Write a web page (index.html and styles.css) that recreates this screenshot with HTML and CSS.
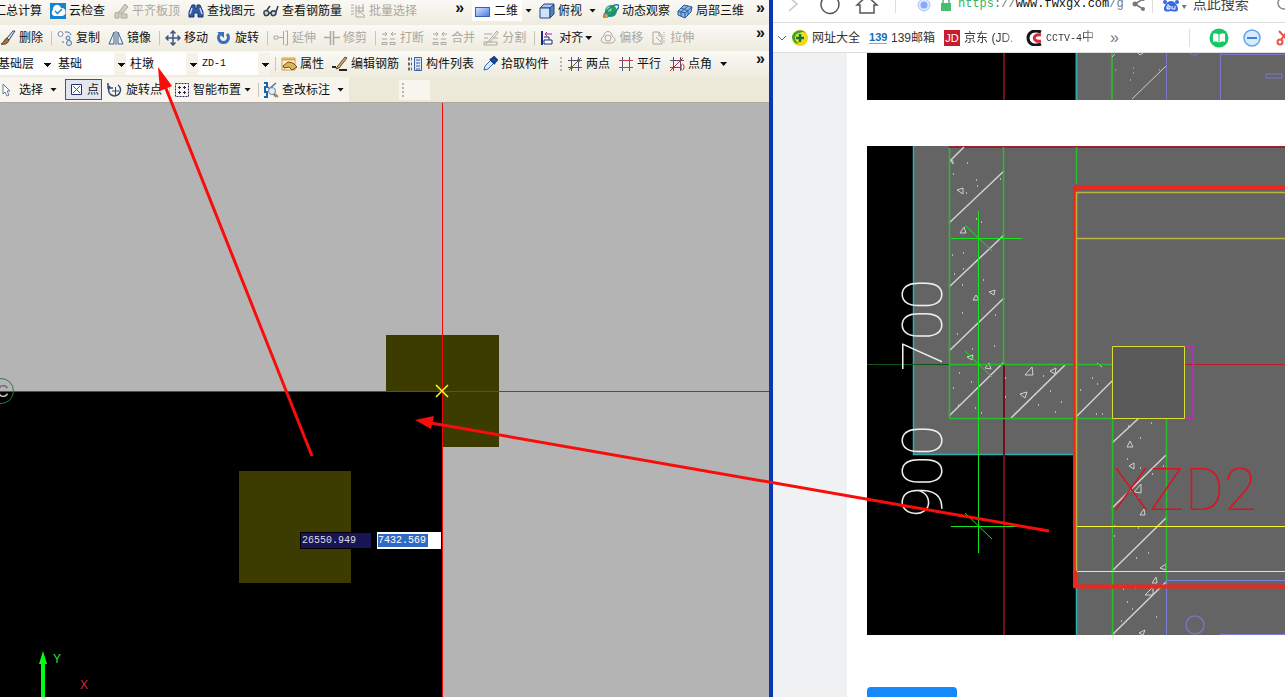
FILE: index.html
```html
<!DOCTYPE html>
<html lang="zh-CN">
<head>
<meta charset="utf-8">
<title>柱墩 ZD-1</title>
<link rel="stylesheet" href="styles.css">
</head>
<body>
<svg class="defs" aria-hidden="true">
  <defs>
    <linearGradient id="blue" x1="0" y1="0" x2="1" y2="1"><stop offset="0" stop-color="#dbe8ff"/><stop offset="1" stop-color="#4478e4"/></linearGradient>
    <linearGradient id="split" gradientUnits="userSpaceOnUse" x1="0" y1="390" x2="0" y2="392"><stop offset="0" stop-color="#6a6a6a"/><stop offset="1" stop-color="#cfcfcf"/></linearGradient>
    <symbol id="grid" viewBox="0 0 16 16"><path d="M1 4.500h14M1 11.500h14M4.500 1v14M11.500 1v14" stroke="#555477" fill="none"/></symbol>
    <symbol id="pair" viewBox="0 0 16 16"><path d="M1 12.500h5v2H1zM9 12.500h5v2H9zM1 9h5M9 9h5M1 4h5M4 2l2 2-2 2M15 4h-5M12 2l-2 2 2 2" stroke="#aaa89f" fill="none"/></symbol>
  </defs>
</svg>
<div class="desktop">
  <main class="cad">
    <div class="toolbars">
      <div class="bar bar-first">
        <button class="tool cut">汇总计算</button>
        <button class="tool"><svg viewBox="0 0 16 16"><rect width="16" height="16" fill="#1684d5"/><path d="M4 13a3.500 3.500 0 0 1-1-6 4 4 0 0 1 8-2 4 4 0 0 1 1 8z" fill="#fff"/><path d="M5 8l2.500 2.500L12 6" stroke="#1684d5" stroke-width="1.500" fill="none"/></svg>云检查</button>
        <button class="tool" disabled><svg viewBox="0 0 16 16"><path d="M2 15v-5l4-1 6-8 3 3-5 6H6v5zM8 11h6v4H8z" fill="#d0cec4" stroke="#aaa89f"/></svg>平齐板顶</button>
        <button class="tool"><svg viewBox="0 0 16 16"><path d="M1 14V9l3-7h3v3h2V2h3l3 7v5h-5v-4H6v4z" fill="#315ba5" stroke="#173469"/><path d="M4 5l-2 6M12 5l2 6" stroke="#bfd7ff" stroke-width="1.500"/></svg>查找图元</button>
        <button class="tool"><svg viewBox="0 0 16 16"><path d="M1 9c0-2 5-2 5 1s-5 4-5 0zM8 10c0-3 5-3 5 0s-5 4-5 0zM6 10h2M4 7l3-4M13 9l2-6" fill="#c3d0e0" stroke="#343b4c" stroke-width="1.500"/></svg>查看钢筋量</button>
        <button class="tool" disabled><svg viewBox="0 0 16 16"><path d="M1 2h3M1 5h3M1 8h3M1 11h3M6 2v12h9M6 5h8M6 8h8M9 2v9M13 1v8M10 9l5 4" stroke="#aaa89f" fill="none"/></svg>批量选择</button>
        <span class="more">»</span>
        <div class="view">
          <button class="tool"><svg viewBox="0 0 16 16"><rect x=".5" y="4.500" width="14" height="9" fill="url(#blue)" stroke="#3560bd"/></svg>二维</button><i class="caret"></i>
          <button class="tool"><svg viewBox="0 0 16 16"><path d="M1 5l4-4h10l-4 4z" fill="#a6c8f2" stroke="#24477c"/><path d="M1 5h10v10H1z" fill="#cfe3fa" stroke="#24477c"/><path d="M11 5l4-4v10l-4 4z" fill="#4f84c7" stroke="#24477c"/></svg>俯视</button><i class="caret"></i>
          <button class="tool"><svg viewBox="0 0 16 16"><circle cx="8" cy="8" r="6" fill="#1fa351"/><circle cx="6" cy="6" r="2.500" fill="#8be0a0"/><path d="M1 14C0 10 11 0 15 2s-8 13-14 12z" fill="none" stroke="#217aaf" stroke-width="1.500"/><circle cx="3" cy="13" r="2" fill="#e39a27"/></svg>动态观察</button>
          <button class="tool"><svg viewBox="0 0 16 16"><path d="M1 8l6-6 8 2-1 5-6 6-7-3z" fill="#8cb8e9" stroke="#2a5b96"/><path d="M1 8l7 2 7-6M8 10v5M4 5l7 3v4M4 13V9l7-6" fill="none" stroke="#2a5b96"/></svg>局部三维</button>
        </div>
        <span class="more last">»</span>
      </div>
      <div class="bar">
        <button class="tool"><svg viewBox="0 0 16 16"><path d="M15 1l-6 9-2-2 6-7z" fill="#d7e1f4" stroke="#304675"/><path d="M7 8l2 2c-1 4-5 5-8 4 3-1 3-5 6-6z" fill="#9a783b" stroke="#594319"/></svg>删除</button>
        <i class="sep"></i>
        <button class="tool"><svg viewBox="0 0 16 16"><circle cx="3.500" cy="4" r="2.500" fill="#fff" stroke="#7887a1"/><circle cx="11" cy="8" r="2" fill="#d8e9ff" stroke="#5372aa"/><circle cx="12" cy="13" r="2.500" fill="#d8e9ff" stroke="#5372aa"/><path d="M8 2c3 0 5 0 6 3M7 12H5" fill="none" stroke="#53678b"/></svg>复制</button>
        <button class="tool"><svg viewBox="0 0 16 16"><path d="M6 2v12H1zM10 2v12h5z" fill="#e7f0fb" stroke="#3d608d"/><path d="M8 1v14" stroke="#3d608d"/></svg>镜像</button>
        <i class="sep"></i>
        <button class="tool"><svg viewBox="0 0 16 16"><path d="M8 1v14M1 8h14M5.500 3.500L8 1l2.500 2.500M5.500 12.500L8 15l2.500-2.500M3.500 5.500L1 8l2.500 2.500M12.500 5.500L15 8l-2.500 2.500" fill="none" stroke="#3f587f" stroke-width="1.500"/></svg>移动</button>
        <button class="tool"><svg viewBox="0 0 16 16"><path d="M4 4a5 5 0 1 0 7 0" fill="none" stroke="#3970bb" stroke-width="3"/><path d="M1 2h7v6z" fill="#3970bb"/></svg>旋转</button>
        <i class="sep"></i>
        <button class="tool" disabled><svg viewBox="0 0 16 16"><path d="M1 6h4v3H1zM6 7.500h4M10.500 1v14M12.500 1h2v14h-2" stroke="#aaa89f" fill="none"/></svg>延伸</button>
        <button class="tool" disabled><svg viewBox="0 0 16 16"><path d="M0 7.500h6M10 7.500h6M6.500 1v14M9.500 1v14" stroke="#aaa89f" fill="none" stroke-width="1.500"/></svg>修剪</button>
        <i class="sep"></i>
        <button class="tool" disabled><svg><use href="#pair"/></svg>打断</button>
        <button class="tool" disabled><svg><use href="#pair"/></svg>合并</button>
        <button class="tool" disabled><svg viewBox="0 0 16 16"><path d="M1 4h8M1 8h4M10 8h5M1 12h13v3H1zM3 14L14 1l1 2-9 10" stroke="#aaa89f" fill="none"/></svg>分割</button>
        <i class="sep"></i>
        <button class="tool"><svg viewBox="0 0 16 16"><path d="M2 1v14" stroke="#162980" stroke-width="2"/><path d="M4 10h8v4H4zM4 7h5v3" fill="#fff" stroke="#162980"/><path d="M12 4H5M7 2L5 4l2 2" stroke="#b11ba5" fill="none"/></svg>对齐</button><i class="caret near"></i>
        <button class="tool" disabled><svg viewBox="0 0 16 16"><path d="M4 6c0-6 8-6 8 0 5 3 3 7-1 7H5c-5 0-5-5-1-7z" stroke="#aaa89f" fill="none"/><circle cx="8" cy="8" r="3" fill="none" stroke="#aaa89f"/></svg>偏移</button>
        <button class="tool" disabled><svg viewBox="0 0 16 16"><path d="M2 2h6l3 4v8H2zM8 2v4h3M5 7l5 5" stroke="#aaa89f" fill="none"/><path d="M13 2v12" stroke="#aaa89f" stroke-dasharray="1 1"/></svg>拉伸</button>
        <span class="more end">»</span>
      </div>
      <div class="bar">
        <select class="combo first" aria-label="楼层"><option>基础层</option></select>
        <select class="combo" aria-label="构件类别"><option>基础</option></select>
        <select class="combo" aria-label="构件类型"><option>柱墩</option></select>
        <select class="combo latin" aria-label="构件"><option>ZD-1</option></select>
        <i class="sep gapless"></i>
        <button class="tool"><svg viewBox="0 0 16 16"><path d="M1 2h13v12H1z" fill="#fff1d4" stroke="#d39b46"/><path d="M1 3.500h13" stroke="#e5a34d" stroke-width="2"/><path d="M2 10l5-4 5 1 4 4-5 3-3-3-5 1z" fill="#d9b657" stroke="#674d1c"/></svg>属性</button>
        <button class="tool"><svg viewBox="0 0 16 16"><path d="M5 11l8-10 2 1-8 10-3 1z" fill="#d2ac67" stroke="#644c25"/><path d="M0 11h4M7 14h8" stroke="#252525" stroke-width="2"/></svg>编辑钢筋</button>
        <button class="tool"><svg viewBox="0 0 16 16"><path d="M1 3h4M1 8h4M1 13h4" stroke="#666" stroke-width="3" stroke-dasharray="2 1"/><path d="M7.500 1.500h7v13h-7z" fill="#dce9ff" stroke="#3c5c9d"/><path d="M9 4h4M9 7h4M9 10h4M9 13h4" stroke="#3c5c9d"/></svg>构件列表</button>
        <button class="tool"><svg viewBox="0 0 16 16"><path d="M2 14l1-4 6-6 3 3-6 6z" fill="#d6e9ff" stroke="#3268a4"/><path d="M8 3l5 5M9 4l3-3 3 3-3 3z" fill="#195cac" stroke="#163c83" stroke-width="2"/></svg>拾取构件</button>
        <i class="grip"></i>
        <button class="tool"><svg viewBox="0 0 16 16"><use href="#grid"/><path d="M2 14L14 2" stroke="#555d37"/><circle cx="4.500" cy="11.500" r="1.500" fill="#5a643b"/><circle cx="11.500" cy="4.500" r="1.500" fill="#5a643b"/></svg>两点</button>
        <button class="tool"><svg viewBox="0 0 16 16"><use href="#grid"/><path d="M1 4.500h14M1 11.500h14" stroke="#b64058"/></svg>平行</button>
        <button class="tool"><svg viewBox="0 0 16 16"><use href="#grid"/><path d="M1 15L14 2" stroke="#b43345"/><ellipse cx="13.500" cy="11" rx="1.500" ry="3" fill="#fff" stroke="#e12727"/></svg>点角</button><i class="caret"></i>
        <span class="more end">»</span>
      </div>
      <div class="bar bar-last">
        <div class="modes">
          <button class="tool"><svg viewBox="0 0 16 16"><path d="M3 2v10l2-2 2 4 2-1-2-4h3z" fill="#fff" stroke="#6d7a95"/></svg>选择</button><i class="caret"></i>
          <button class="tool active" aria-pressed="true"><svg viewBox="0 0 16 16"><path d="M2.500 2.500h10v10h-10z" fill="#fff" stroke="#26306d"/><path d="M4 4l7 7M11 4l-7 7" stroke="#b72d4d"/></svg>点</button>
          <button class="tool"><svg viewBox="0 0 16 16"><path d="M3 4a6 6 0 1 0 8-1M1 1v5h5" stroke="#304979" stroke-width="1.500" fill="none"/><path d="M5 9h7M8.500 5v8" stroke="#34496c"/></svg>旋转点</button>
          <i class="sep"></i>
          <button class="tool"><svg viewBox="0 0 16 16"><path d="M1.500 1.500h13v13h-13z" fill="none" stroke="#242958" stroke-dasharray="2 1"/><path d="M4 5.500h3M9 5.500h3M4 10.500h3M9 10.500h3M5.500 4v3M10.500 4v3M5.500 9v3M10.500 9v3" stroke="#242958"/></svg>智能布置</button><i class="caret near"></i>
          <i class="sep"></i>
          <button class="tool"><svg viewBox="0 0 16 16"><path d="M1 1h3v4H2v5h2v5H1" fill="none" stroke="#1765ac" stroke-width="2"/><path d="M6 7l7-6M5 5l8 10" stroke="#55738b" stroke-width="1.500"/><circle cx="9" cy="9" r="3.500" fill="#dceeff" stroke="#718699"/><path d="M12 12l3 3" stroke="#b78a35" stroke-width="2"/></svg>查改标注</button><i class="caret"></i>
        </div>
        <div class="stub"><i class="grip"></i></div>
      </div>
    </div>
    <div class="model">
      <svg class="drawing" viewBox="0 103 769 594" preserveAspectRatio="xMinYMin slice">
        <rect y="103" width="769" height="594" fill="#b4b4b4"/>
        <path d="M0 391h443v306H0z" fill="#000"/>
        <path d="M386 335h113v112h-56v-56h-57zM239 471h112v112H239z" fill="#3c3c00"/>
        <path d="M0 391.500h769M442.500 103v594" stroke="#f00a0a"/>
        <path d="M436 385l12 12M448 385l-12 12" stroke="#ffff20" stroke-width="1.500"/>
        <circle cx="1" cy="391" r="12.500" fill="none" stroke="#237f40"/>
        <text x="-3" y="397" class="axis-name" fill="url(#split)">C</text>
        <path d="M41 697v-33h-2l4-13 4 13h-2v33z" fill="#0f1"/>
        <text x="53" y="663" class="axis-y">Y</text>
        <text x="80" y="689" class="axis-x">X</text>
      </svg>
      <div class="coordinates">
        <input class="coordinate" aria-label="X 坐标" value="26550.949">
        <label class="coordinate-box"><input class="coordinate selected" aria-label="Y 坐标" value="7432.569"></label>
      </div>
    </div>
  </main>
  <section class="browser">
    <div class="address">
      <svg class="nav" viewBox="0 0 112 36"><path d="M16 11l8 7-8 7" fill="none" stroke="#c5c5c5" stroke-width="1.500"/><path d="M54 10a9 9 0 1 0 8 1" fill="none" stroke="#555" stroke-width="1.500"/><path d="M84 19l10-9 10 9h-3v8H87v-8z" fill="none" stroke="#555" stroke-width="1.500"/></svg>
      <i class="rule"></i>
      <svg class="site" viewBox="0 0 16 16"><circle cx="8" cy="9" r="6" fill="#dce8ff" stroke="#a9c4fa"/><circle cx="8" cy="9" r="3.500" fill="#88aaf5"/></svg>
      <svg class="lock" viewBox="0 0 12 16"><path d="M3 8V5a3 3 0 0 1 6 0v3" fill="none" stroke="#47bd72" stroke-width="1.500"/><path d="M1 7h10v8H1z" fill="#47bd72"/></svg>
      <span class="url"><span class="scheme">https</span><span class="faint">://</span>www.fwxgx.com<span class="faint">/g</span></span>
      <svg class="share" viewBox="0 0 14 16"><path d="M11 3L3 8l8 5" fill="none" stroke="#777" stroke-width="1.500"/><circle cx="11" cy="3" r="2" fill="#777"/><circle cx="3" cy="8" r="2.500" fill="#777"/><circle cx="11" cy="13" r="2" fill="#777"/></svg>
      <i class="rule"></i>
      <svg class="paw" viewBox="0 0 16 16"><path d="M8 5c4 0 7 5 7 8s-3 3-7 2c-4 1-7 1-7-2s3-8 7-8z" fill="#356be7"/><circle cx="2" cy="6" r="2" fill="#356be7"/><circle cx="6" cy="2" r="2" fill="#356be7"/><circle cx="11" cy="2" r="2" fill="#356be7"/><circle cx="14" cy="6" r="2" fill="#356be7"/><path d="M5 8v5M5 10h2v3H4v-3M9 10v3h3v-3" fill="none" stroke="#fff"/></svg>
      <i class="caret"></i>
      <input class="search" aria-label="搜索" value="点此搜索">
      <svg class="lens" viewBox="0 0 16 16"><circle cx="7" cy="7" r="6" fill="none" stroke="#888" stroke-width="1.500"/></svg>
    </div>
    <nav class="bookmarks">
      <svg class="fold" viewBox="0 0 8 8"><path d="M0 2l4 4 4-4" fill="none" stroke="#666"/></svg>
      <a href="#" class="mark"><svg viewBox="0 0 16 16"><circle cx="8" cy="8" r="8" fill="#f5d514"/><path d="M0 8a8 8 0 0 1 14-5C9 0 4 5 7 8s0 8-5 4z" fill="#36a635"/><circle cx="8" cy="8" r="5" fill="#f4de28"/><path d="M8 4v8M4 8h8" stroke="#13752b" stroke-width="2.500"/></svg>网址大全</a>
      <a href="#" class="mark"><span class="logo-139">139</span><span>139邮箱</span></a>
      <a href="#" class="mark"><span class="logo-jd">JD</span><span class="fade">京东 (JD.</span></a>
      <a href="#" class="mark"><svg viewBox="0 0 16 16"><path d="M15 2C7-1 2 3 2 8s5 9 13 6" fill="none" stroke="#161616" stroke-width="3"/><path d="M15 5c-9-2-9 8 0 6" fill="none" stroke="#d9273b" stroke-width="3"/></svg><span class="fade"><span class="latin">CCTV-4</span>中</span></a>
      <span class="overflow">»</span>
      <div class="extras">
        <i class="rule"></i>
        <svg viewBox="0 0 20 20"><circle cx="10" cy="10" r="9.500" fill="#16c864"/><path d="M4 6c3-1 5 0 6 1 1-1 3-2 6-1v8c-3-1-5 0-6 1-1-1-3-2-6-1z" fill="#fff"/><path d="M10 7v8" stroke="#16c864"/></svg>
        <svg viewBox="0 0 20 20"><circle cx="10" cy="10" r="8" fill="#d9eaff" stroke="#64a2eb" stroke-width="1.500"/><path d="M5 10h10" stroke="#3684df" stroke-width="2"/></svg>
        <svg viewBox="0 0 20 20"><path d="M4 3l10 11M13 2L6 12" stroke="#ef5548" stroke-width="2"/><circle cx="5" cy="14" r="2.500" fill="none" stroke="#ef5548" stroke-width="2"/></svg>
      </div>
    </nav>
    <div class="page">
      <article class="sheet">
        <svg class="plan plan-top" viewBox="867 53 418 47" preserveAspectRatio="xMinYMin slice">
          <rect x="867" y="53" width="418" height="47"/>
          <rect x="1076" y="53" width="209" height="47" fill="#646464"/>
          <path d="M1004 53v47" stroke="#711016" stroke-width="2"/><path d="M1076.500 53v47" stroke="#36a9a9" stroke-width="2"/><path d="M1112 53v47" stroke="#30ae36" stroke-width="2"/>
          <path d="M1166.500 53v47M1220.500 100V54.500h65M1266 74h16v4h-16zM1190 53q5 4 9 0" fill="none" stroke="#7b78cc"/>
          <path d="M1132 99l34-33M1112 57l3-3M1138 53l2 2 3-2" fill="none" stroke="#ccc"/><path d="M1115 70h1M1133 68h1M1133 73h1M1130 80h1M1159 70h1" stroke="#ccc"/>
        </svg>
        <svg class="plan plan-main" viewBox="867 146 418 489" preserveAspectRatio="xMinYMin slice">
          <rect x="867" y="146" width="418" height="489"/>
          <path d="M913 146h372v489h-209V454H913z" fill="#646464"/>
          <path d="M913.500 146v308.500H1074M1076.500 588v47" fill="none" stroke="#2cb1b1" stroke-width="1.500"/>
          <path d="M949 147h336" stroke="#96222b" stroke-width="2"/><path d="M1185 364.500h100" stroke="#b91e28"/><path d="M1004 365v270" stroke="#71101a" stroke-width="2"/>
          <path d="M867 364.500h82" stroke="#0b5612"/>
          <g fill="none" stroke="#d2d2d2">
            <path d="M950 161l14-14M949 223l55-52M949 287l55-52M949 351l55-53M949 416l55-54M1011 418l54-53M1076 417l36-36M1112 443l27-25M1112 508l54-53M1112 571l54-53M1112 635l54-53" stroke-width="1.500"/>
            <path d="M957 190l6-2v6zM960 233l4-6 2 6zM989 292l6-2-1 5zM973 300l3-5 3 5zM967 357l6-2-1 5zM985 368l4-5 2 6zM1025 375l7-8 1 8zM1050 371l6-3-1 6zM1020 394l7-2-2 6zM950 160l3 1v3zM1097 363l5 4M1127 447l3-6 3 6zM1129 466l5-3v6zM1134 492l7-8v9zM1140 515l4-6 1 6zM1160 568l6-4v6zM1152 583l4-6 1 6zM1145 595l8-8v8zM1139 633l6-3-2 5z"/>
            <path d="M967 163h1M953 174h1M976 180h1M977 186h1M966 193h1M1000 179h1M981 222h1M976 219h1M952 255h1M963 253h1M963 269h1M954 274h1M962 285h1M983 280h1M962 313h1M995 315h1M957 334h1M994 346h1M972 349h1M959 373h1M953 388h1M971 382h1M1005 378h1M1005 397h1M958 405h1M975 408h1M981 413h1M1043 376h1M1050 391h1M1038 405h1M1061 402h1M1055 412h1M1092 378h1M1097 384h1M1080 390h1M1096 414h1M1102 414h1M1128 426h1M1151 423h1M1140 438h1M1127 459h1M1140 468h1M1152 474h1M1163 466h1M1138 498h1M1164 509h1M1114 526h1M1138 528h1M1114 536h1M1148 553h1M1136 558h1M1123 589h1M1135 588h1M1127 602h1M1132 609h1M1156 617h1M1121 621h1" stroke-width="1.500"/>
          </g>
          <path d="M949.500 148v270.500H1112M1003.500 147v218M949 364.500h163M1076.500 147v37M1112.500 418v217M1166.500 418v165" fill="none" stroke="#27bd2d" stroke-width="1.500"/>
          <path d="M978.500 211v342M951 238.500h71M951 526.500h71M965 225l27 26M965 351l27 26M965 513l27 26" stroke="#16e51d"/>
          <g class="lettering"><text transform="translate(942 371) rotate(-90)">700</text><text transform="translate(942 517) rotate(-90)">900</text></g>
          <text class="pier" x="1113" y="510">XZD2</text>
          <path d="M1166.500 635v-54.500H1285M1220 634.500h65" fill="none" stroke="#7b80d5"/><circle cx="1195" cy="625" r="9" fill="none" stroke="#7b72bd" stroke-width="1.500"/>
          <path d="M1290 187.500H1075V586.500h215" fill="none" stroke="#ee261b" stroke-width="4" stroke-linejoin="round"/>
          <path d="M1076.500 571V192.500H1285M1077 238.500h208" fill="none" stroke="#b8b43e" stroke-width="1.500"/><path d="M1077 526.500h208M1077 571.500h208" stroke="#f5f52b"/>
          <path d="M1112.500 346.500h72v72h-72z" fill="#5a5a5a" stroke="#dcdc32"/>
          <path d="M1186 346.500h7v72h-7" fill="none" stroke="#c527c5" stroke-width="1.500"/>
        </svg>
        <button class="primary" aria-label="提交"></button>
      </article>
    </div>
  </section>
  <svg class="annotations" aria-hidden="true">
    <path d="M312 456L165 86M1049 531L431 423" stroke="#f90d0a" stroke-width="3"/>
    <path d="M158 67l14 19-12 5zM415 420l19-4-3 13z" fill="#f90d0a"/>
  </svg>
</div>
</body>
</html>
```

FILE: styles.css
```css
* { box-sizing: border-box; }
body { margin: 0; overflow: hidden; font: 12px/16px "Liberation Sans", "Noto Sans CJK SC", sans-serif; color: #111; }
button, input, select { font: inherit; color: inherit; border: 0; padding: 0; margin: 0; background: none; }
svg { display: block; flex: none; }
i { flex: none; }
.defs { position: absolute; width: 0; height: 0; }
.desktop { position: relative; display: grid; grid-template-columns: 773fr 512fr; height: 100vh; overflow: hidden; }
.annotations { position: absolute; inset: 0; width: 100%; height: 100%; pointer-events: none; fill: none; }
.latin { font-family: "Liberation Mono", monospace; font-size: 10px; }

.cad { display: flex; flex-direction: column; min-width: 0; border-right: 4px solid #0838b8; }
.toolbars { background: #ece9d8; border-bottom: 1px solid #aaa89f; }
.bar { display: flex; align-items: center; gap: 8px; height: 26px; overflow: hidden; background: linear-gradient(#faf9f5, #eeebdf); }
.bar-first { height: 25px; padding-bottom: 4px; }
.bar-last { height: 25px; background: none; }
.tool { display: flex; flex: none; align-items: center; gap: 3px; height: 21px; white-space: nowrap; }
.tool svg { width: 16px; height: 16px; }
.tool:disabled { color: #aaa89f; }
.cut { margin-left: -6px; }
.active { gap: 2px; padding: 0 2px 0 3px; background: #e1e6f0; border: 1px solid #3353a0; }
.caret { width: 7px; height: 4px; background: #111; clip-path: polygon(0 0, 100% 0, 50% 100%); }
.near { margin-left: -6px; }
.sep { width: 1px; height: 14px; margin-right: -3px; background: #c8c5b5; }
.gapless { margin-left: -3px; }
.grip { width: 2px; height: 14px; margin: 0 -3px 0 3px; background: repeating-linear-gradient(#b8b5a6 0 2px, transparent 2px 4px); }
.more { align-self: flex-start; margin-left: auto; font-size: 16px; line-height: 16px; font-weight: bold; }
.end { margin-right: 4px; }
.view { display: flex; align-items: center; gap: 7px; padding-left: 3px; background: linear-gradient(90deg, #fff 50px, transparent 50px); }
.last { margin: 0 4px; }
.bar > .combo { flex: none; width: 72px; height: 22px; margin-right: -8px; padding-left: 4px; appearance: none; border-radius: 0; background: conic-gradient(from 315deg at 50% 100%, #111 90deg, transparent 0) 64px 10px / 7px 4px no-repeat, linear-gradient(90deg, #fff 60px, #f4f2e9 60px); }
.bar > .first { width: 54px; padding: 0; text-indent: -2px; background-position: 44px 10px, 0 0; }
.bar > .combo:nth-child(4) { margin-right: 0; }
.modes { display: flex; align-items: center; gap: 7px; height: 100%; padding-right: 5px; background: #f7f5ee; }
.modes > .active { margin: 0 -2px 0 1px; }
.modes > .near { margin-left: -4px; }
.stub { display: flex; align-items: center; width: 31px; height: 20px; margin-left: 42px; background: #f7f5ee; }
.model { position: relative; flex: 1; min-height: 0; }
.drawing { width: 100%; height: 100%; }
.axis-name { font-size: 16px; }
.axis-y { fill: #2be33a; font-size: 12px; }
.axis-x { fill: #e32232; font-size: 12px; }
.coordinates { position: absolute; left: 300px; top: 429px; display: flex; gap: 5px; font: 10px/15px "Liberation Mono", monospace; }
.coordinate { width: 72px; height: 17px; padding-left: 1px; border: 1px solid #000; background: #191455; color: #ddd; }
.coordinate-box { width: 64px; height: 17px; padding: 2px 1px; background: #fff; }
.coordinate.selected { display: block; width: 50px; height: 13px; padding: 0; border: 0; background: #316ac5; color: #fff; }

.browser { display: flex; flex-direction: column; min-width: 0; overflow: hidden; background: #fff; }
.address { display: flex; flex: none; align-items: center; height: 37px; margin-top: -14px; overflow: hidden; border-bottom: 1px solid #ddd; }
.address > * { flex: none; }
.nav { width: 112px; height: 36px; margin-right: 10px; }
.rule { width: 1px; height: 18px; background: #ddd; }
.site { width: 16px; height: 16px; margin: 0 7px 0 20px; }
.lock { width: 14px; height: 16px; margin-right: 5px; }
.url { font: 12px/16px "Liberation Mono", monospace; white-space: nowrap; }
.scheme { color: #32b765; }
.faint { color: #777; }
.share { width: 14px; height: 16px; margin: 0 6px 0 8px; }
.paw { width: 16px; height: 16px; margin: 0 3px 0 10px; }
.address .caret { margin: 6px 6px 0 0; width: 5px; background: #777; }
.search { width: 72px; color: #444; font-size: 14px; }
.lens { width: 16px; height: 16px; margin-left: 12px; }
.bookmarks { display: flex; flex: none; align-items: center; height: 30px; padding-left: 5px; border-bottom: 1px solid #ddd; }
.fold { width: 8px; height: 8px; margin-right: 6px; }
.mark { display: flex; flex: none; align-items: center; gap: 4px; margin-right: 9px; color: #333; text-decoration: none; white-space: nowrap; }
.mark svg { width: 16px; height: 16px; }
.logo-139 { width: 18px; border-bottom: 1px solid #6fb1de; color: #126bb5; font: bold 11px/12px "Liberation Sans", sans-serif; }
.logo-jd { width: 16px; height: 16px; background: #c81c2f; color: #fff; font-size: 11px; text-align: center; }
.fade { width: 53px; background: linear-gradient(90deg, #333 36px, #bbb); background-clip: text; color: transparent; }
.overflow { margin-left: 2px; color: #777; font-size: 16px; }
.extras { display: flex; align-items: center; gap: 13px; margin-left: auto; margin-right: -10px; }
.extras .rule { margin-right: 6px; }
.extras svg { width: 20px; height: 20px; }
.page { flex: 1; min-height: 0; padding-left: 74px; background: #f0f1f3; overflow: hidden; }
.sheet { padding-left: 20px; background: #fff; }
.plan { width: 100%; }
.plan-top { height: 47px; margin-bottom: 46px; }
.plan-main { aspect-ratio: 418 / 489; margin-bottom: 52px; }
.lettering { fill: #eee; font: 100 56px Roboto, sans-serif; }
.pier { fill: #d9141e; font: 100 60px Roboto, sans-serif; }
.primary { display: block; width: 90px; height: 36px; border-radius: 4px; background: #1389fb; }
```
